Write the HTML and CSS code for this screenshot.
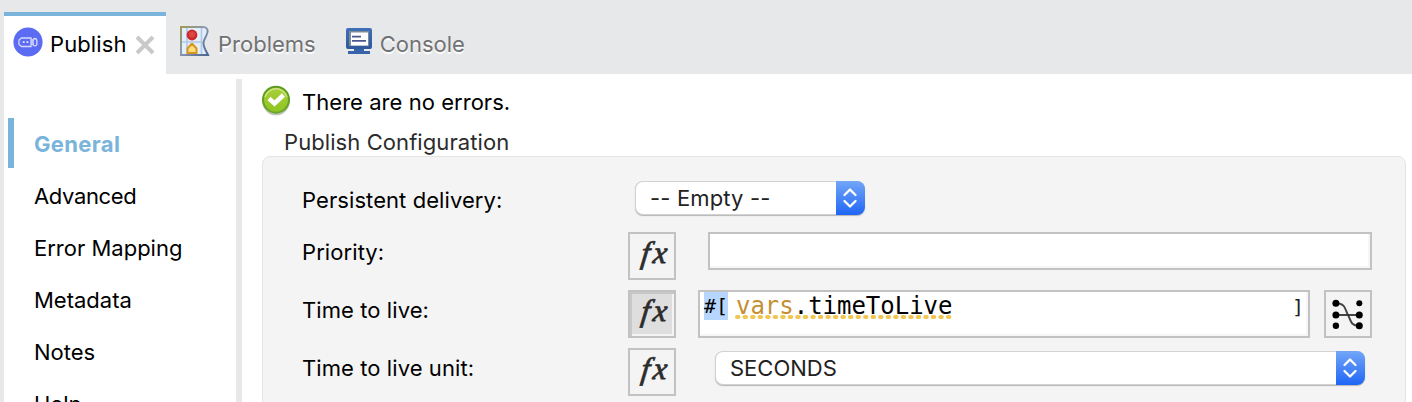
FILE: index.html
```html
<!DOCTYPE html>
<html lang="en">
<head>
<meta charset="utf-8">
<title>Publish</title>
<link rel="stylesheet" href="styles.css">
</head>
<body>
<svg width="0" height="0" class="defs">
  <defs>
    <linearGradient id="okFill" x1="0" y1="0" x2="0" y2="1"><stop offset="0" stop-color="#a9cf3c"/><stop offset="1" stop-color="#8fc520"/></linearGradient>
    <linearGradient id="okRing" x1="0" y1="0" x2="0" y2="1"><stop offset="0" stop-color="#5d9a1d"/><stop offset="1" stop-color="#6aa52a"/></linearGradient>
    <linearGradient id="page" x1="0" y1="0" x2="1" y2="1"><stop offset="0" stop-color="#a19a55"/><stop offset=".45" stop-color="#8b98b0"/><stop offset="1" stop-color="#4d6693"/></linearGradient>
    <linearGradient id="screen" x1="0" y1="0" x2="0" y2="1"><stop offset="0" stop-color="#3f70b8"/><stop offset="1" stop-color="#30589c"/></linearGradient>
  </defs>
</svg>
<header class="tabs">
  <div class="tab active">
    <svg class="icon-publish" width="30" height="30" viewBox="0 0 30 30"><circle cx="15" cy="15" r="14.600" fill="#5c6cf2"/><g fill="none" stroke="#d4d8ff" stroke-width="1.300"><path d="M18 11H8.500L6 13v4.500l2.500 2H18z"/><path d="M19 12v6.500"/><ellipse cx="22" cy="15.200" rx="2" ry="3.700"/></g><path d="M9.800 14.300h1.800v1.800H9.800zM13.500 14.300h1.800v1.800h-1.800z" fill="#e8eaff"/></svg>
    <span class="tab-label">Publish</span>
    <svg class="close" width="20" height="20" viewBox="0 0 20 20"><path d="M2 2l16 16M18 2L2 18" stroke="#c9c9c9" stroke-width="4"/></svg>
  </div>
  <div class="tab">
    <svg class="icon-problems" width="30" height="31" viewBox="0 0 30 31"><path d="M1 1h22c3 0 5 2 4.500 5-.5 4-4 7-4 11 0 5 3 9 5 12H1z" fill="#e2eff9"/><path d="M2 16h22M21.500 2v26M7 2v26" stroke="#b4c8e8" stroke-width="1.700"/><path d="M1 29V1h22c3 0 5 2 4.500 5-.5 4-4 7-4 11 0 5 3 8.500 4.500 12z" fill="none" stroke="url(#page)" stroke-width="2"/><circle cx="12" cy="9" r="5.400" fill="#cc2a2b"/><circle cx="12" cy="8.500" r="3" fill="#dd4543"/><path d="M7.500 27v-4.500l4-4.500h1l4 4.500V27z" fill="#fbdf7c" stroke="#d99522" stroke-width="2"/></svg>
    <span class="tab-label muted">Problems</span>
  </div>
  <div class="tab">
    <svg class="icon-console" width="27" height="27" viewBox="0 0 27 27"><rect x="0" y="0" width="26" height="21" rx="2" fill="url(#screen)"/><rect x="3" y="3" width="20" height="15" fill="#7d8b98"/><rect x="5" y="4.500" width="17" height="13" fill="#fff"/><path d="M6 8.700h9M6 12.800h14" stroke="#4b568f" stroke-width="1.700"/><path d="M8 21h10v2h6v3H2v-3h6z" fill="#3764a9"/></svg>
    <span class="tab-label muted">Console</span>
  </div>
</header>
<div class="body">
  <nav class="side">
    <a class="nav current">General</a>
    <a class="nav tight">Advanced</a>
    <a class="nav">Error Mapping</a>
    <a class="nav">Metadata</a>
    <a class="nav">Notes</a>
    <a class="nav">Help</a>
  </nav>
  <main class="content">
    <div class="status">
      <svg width="30" height="31" viewBox="0 0 30 31"><ellipse cx="15" cy="17" rx="13.500" ry="13.300" fill="#8b9681" opacity=".55"/><circle cx="15" cy="14.700" r="13" fill="url(#okFill)" stroke="url(#okRing)" stroke-width="2"/><path d="M4 12a11.500 11.500 0 0 1 22 0" fill="none" stroke="#cce37b" stroke-width="1.500"/><path d="M8 13.500l5.500 5 9-8.500" fill="none" stroke="#fff" stroke-width="4.500"/></svg>
      <span>There are no errors.</span>
    </div>
    <h2 class="group-title">Publish Configuration</h2>
    <section class="group">
      <div class="row first">
        <label>Persistent delivery:</label>
        <div class="select short"><span>-- Empty --</span><i class="knob"><svg width="16" height="22" viewBox="0 0 16 22"><path d="M2.500 8L8 2.500 13.500 8M2.500 14L8 19.500 13.500 14" fill="none" stroke="#fff" stroke-width="2.300" stroke-linecap="round" stroke-linejoin="round"/></svg></i></div>
      </div>
      <div class="row">
        <label>Priority:</label>
        <button class="fx"><span class="f">f</span><span class="x">x</span></button>
        <div class="field priority"></div>
      </div>
      <div class="row">
        <label>Time to live:</label>
        <button class="fx pressed"><span class="f">f</span><span class="x">x</span></button>
        <div class="field expr"><span class="open">#[</span><span class="code"><b>vars</b>.timeToLive<svg class="squiggle" width="220" height="4" viewBox="0 0 220 4"><path d="M2 2H219" stroke="#f0c650" stroke-width="4" stroke-linecap="round" stroke-dasharray="1.500 6.030"/></svg></span><span class="end">]</span></div>
        <button class="map"><svg width="32" height="32" viewBox="0 0 32 32"><path d="M4 5.300C14 5.300 13 12 16 17s2 10.700 11 10.700" fill="none" stroke="#444" stroke-width="2"/><path d="M4 17h23" stroke="#333" stroke-width="1.800"/><g><circle cx="3.900" cy="5.300" r="3.500"/><circle cx="3.900" cy="17" r="3.500"/><circle cx="3.900" cy="27.700" r="3.200"/><circle cx="27.300" cy="5.300" r="3"/><circle cx="27.300" cy="17" r="3.500"/><circle cx="27.300" cy="27.700" r="3.500"/></g></svg></button>
      </div>
      <div class="row">
        <label>Time to live unit:</label>
        <button class="fx"><span class="f">f</span><span class="x">x</span></button>
        <div class="select long"><span>SECONDS</span><i class="knob"><svg width="16" height="22" viewBox="0 0 16 22"><path d="M2.500 8L8 2.500 13.500 8M2.500 14L8 19.500 13.500 14" fill="none" stroke="#fff" stroke-width="2.300" stroke-linecap="round" stroke-linejoin="round"/></svg></i></div>
      </div>
    </section>
  </main>
</div>
</body>
</html>
```

FILE: styles.css
```css
* { box-sizing: border-box; }
html, body { height: 100%; }
body {
  margin: 0;
  overflow: hidden;
  background: #fff;
  color: #000;
  font: 22px/24px Inter, "Liberation Sans", sans-serif;
}
.defs { display: block; height: 0; }
svg { flex: none; }

.tabs {
  display: flex;
  height: 74px;
  padding: 12px 0 0 4px;
  background: #e7e8ea;
}
.tab { display: flex; height: 62px; }
.tab.active { width: 162px; background: #fff; border-top: 4px solid #7ab4db; padding-left: 9px; }
.tab-label { margin-top: 20px; white-space: nowrap; }
.active .tab-label { margin-top: 16px; width: 89px; padding-left: 7px; letter-spacing: .1px; }
.muted { color: #717273; text-shadow: 0 2px 1px #fff; padding-left: 8px; }
.icon-publish { margin-top: 11px; }
.close { margin: 19px 0 0 3px; }
.icon-problems { margin: 14px 0 0 14px; }
.icon-console { margin: 16px 0 0 30px; }
.icon-console + .muted { padding-left: 7px; }

.body { display: flex; height: 328px; border-left: 4px solid #e7e8ea; }
.side { width: 238px; height: 323px; margin-top: 5px; padding-top: 39px; border-right: 6px solid #e7e8ea; overflow: hidden; }
.nav { display: block; height: 52px; padding: 14px 0 0 30px; white-space: nowrap; }
.nav.tight { letter-spacing: -.35px; }
.nav.current {
  height: 50px;
  margin: 0 0 2px 4px;
  padding: 14px 0 0 20px;
  border-left: 6px solid #7ab4db;
  color: #7ab4db;
  font-weight: 700;
  letter-spacing: .35px;
}

.content { flex: 1; padding: 11px 6px 0 20px; overflow: hidden; }
.status { display: flex; height: 45px; gap: 11px; margin-left: -1px; }
.status span { margin-top: 5px; letter-spacing: .04px; }
.group-title { margin: 0 0 0 22px; height: 26px; color: #2b2b2b; font: inherit; letter-spacing: .08px; }
.group {
  height: 260px;
  padding: 23px 0 0 39px;
  background: #f4f4f4;
  border: 1px solid #e4e4e4;
  border-radius: 8px;
}
.row { display: flex; height: 48px; margin-bottom: 10px; }
.row.first { height: 42px; }
.row label { width: 326px; padding-top: 8px; white-space: nowrap; letter-spacing: .08px; }

.select {
  display: flex;
  justify-content: space-between;
  height: 32px;
  padding-left: 14px;
  color: #222;
  background: #fff;
  border-radius: 7px;
  box-shadow: 0 0 0 1px #d2d2d2, 0 1px 1px 1px #b5b5b5;
}
.select > span { padding-top: 4px; }
.select.short { width: 228px; margin: 2px 0 0 8px; letter-spacing: .15px; }
.select.long { width: 648px; margin: 4px 0 0 40px; }
.knob {
  display: flex;
  align-items: center;
  justify-content: center;
  width: 29px;
  height: 34px;
  margin: -1px -1px 0 0;
  border-radius: 0 8px 8px 0;
  background: linear-gradient(#73a6f8, #1e66f5);
}
.knob svg { margin-right: 1px; }

.fx, .map { display: flex; flex: none; width: 48px; height: 48px; padding: 0; border: 2px solid #c2c2c2; background: #f4f4f4; }
.fx {
  font: italic 400 31px/38px "Liberation Serif", serif;
  color: #2c2c2c;
  -webkit-text-stroke: .8px #2c2c2c;
  padding-left: 11px;
}
.fx span { display: block; transform: skewX(-7deg); }
.fx .x { margin-left: 3px; }
.fx.pressed { background: #dedede; box-shadow: inset 2px 2px #c8c8c8, inset -2px -2px #f4f4f4; }
.map { margin-left: 14px; align-items: center; justify-content: center; }

.field { background: #fff; border: 2px solid #c2c2c2; box-shadow: inset -2px -2px #f6f6f6; }
.priority { width: 664px; height: 38px; margin-left: 32px; }
.expr { display: flex; width: 612px; height: 48px; margin-left: 22px; padding-left: 4px; font: 24px/28px "DejaVu Sans Mono", monospace; }
.open { flex: none; width: 24px; height: 28px; background: #b7d6fd; font-size: 20px; letter-spacing: -.1px; white-space: nowrap; }
.code { position: relative; margin-left: 8px; letter-spacing: -.02px; }
.code b { color: #c58f34; font-weight: 400; }
.squiggle { position: absolute; left: -1px; top: 23px; }
.end { margin: 1px 4px 0 auto; font-size: 20px; color: #222; }
```
